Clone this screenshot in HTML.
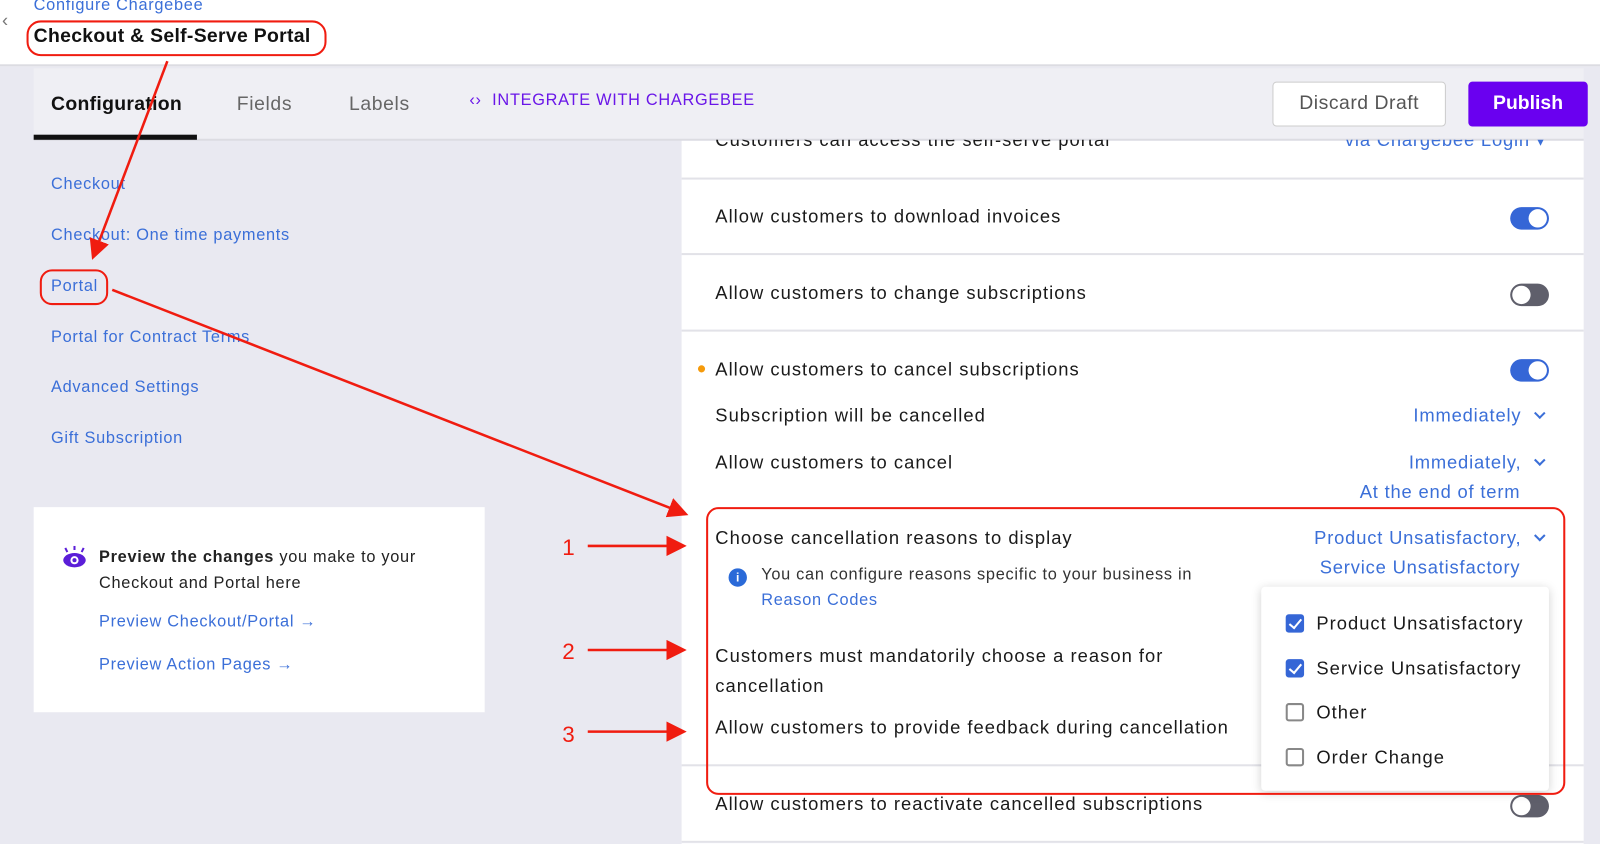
<!DOCTYPE html>
<html><head><meta charset="utf-8"><style>
*{margin:0;padding:0;box-sizing:border-box}
html,body{width:1600px;height:844px;overflow:hidden;background:#e9e9f1;font-family:"Liberation Sans",sans-serif}
#w{position:absolute;left:0;top:0;width:1568px;height:827px;transform:scale(1.0204);transform-origin:0 0;background:#e9e9f1}
.a{position:absolute;white-space:nowrap}
.t{font-size:18px;color:#1a1a1a;letter-spacing:1px}
.l{font-size:16px;letter-spacing:.7px}
.b{color:#3b6fd8}
.v{font-size:18px;letter-spacing:.8px;color:#3b6fd8;text-align:right}
.hr{position:absolute;left:668px;width:884px;height:2px;background:#e2e2e8}
.tg{position:absolute;width:38px;height:22px;border-radius:11px;background:#3566d6}
.tg::after{content:"";position:absolute;right:2px;top:2px;width:18px;height:18px;border-radius:50%;background:#fff}
.tg.off{background:#5f5f6b}.tg.off::after{left:2px;right:auto}
.cb{position:absolute;width:18px;height:18px;border-radius:3px;border:2px solid #888;background:#fff}
.cb.on{background:#3566d6;border-color:#3566d6}
.cb.on::after{content:"";position:absolute;left:4px;top:0px;width:5px;height:10px;border:solid #fff;border-width:0 2px 2px 0;transform:rotate(40deg)}
.chev{display:inline-block;width:8px;height:8px;border:solid #3b6fd8;border-width:0 2px 2px 0;transform:rotate(45deg);margin-left:14px;position:relative;top:-4px}
</style></head><body><div id="w">
<div class="a" style="left:0;top:0;width:1568px;height:65px;background:#fff;border-bottom:2px solid #dcdce2"></div>
<div class="a" style="left:2px;top:10px;font-size:18px;color:#777">‹</div>
<div class="a b l" style="left:33px;top:-3px">Configure Chargebee</div>
<div class="a" style="left:33px;top:25px;font-size:19px;color:#111;font-weight:bold;letter-spacing:.3px">Checkout &amp; Self-Serve Portal</div>
<div class="a" style="left:33px;top:67px;width:1519px;height:71px;background:#efeff4;border-bottom:2px solid #dcdce2"></div>
<div class="a" style="left:50px;top:92px;font-size:19px;color:#111;font-weight:bold;letter-spacing:.3px">Configuration</div>
<div class="a" style="left:33px;top:132px;width:160px;height:5px;background:#111"></div>
<div class="a" style="left:232px;top:92px;font-size:19px;color:#666;letter-spacing:.6px">Fields</div>
<div class="a" style="left:342px;top:92px;font-size:19px;color:#666;letter-spacing:.6px">Labels</div>
<div class="a" style="left:460px;top:90px;font-size:16px;color:#6a16e8;letter-spacing:.7px">‹› &nbsp;INTEGRATE WITH CHARGEBEE</div>
<div class="a" style="left:1247px;top:80px;width:170px;height:44px;border:1px solid #ccc;border-radius:4px;background:#fff;font-size:19px;color:#555;text-align:center;line-height:42px;letter-spacing:.5px">Discard Draft</div>
<div class="a" style="left:1439px;top:80px;width:117px;height:44px;border-radius:4px;background:#6a00f0;font-size:19px;color:#fff;text-align:center;line-height:44px;font-weight:bold">Publish</div>
<div class="a b l" style="left:50px;top:172px">Checkout</div>
<div class="a b l" style="left:50px;top:222px">Checkout: One time payments</div>
<div class="a b l" style="left:50px;top:272px">Portal</div>
<div class="a b l" style="left:50px;top:322px">Portal for Contract Terms</div>
<div class="a b l" style="left:50px;top:371px">Advanced Settings</div>
<div class="a b l" style="left:50px;top:421px">Gift Subscription</div>
<div class="a" style="left:33px;top:497px;width:442px;height:201px;background:#fff"></div>
<svg class="a" style="left:60px;top:535px" width="26" height="22"><g stroke="#5b1ed8" stroke-width="2"><line x1="4" y1="2" x2="6" y2="6"/><line x1="13" y1="0" x2="13" y2="4"/><line x1="22" y1="2" x2="20" y2="6"/></g><ellipse cx="13" cy="14" rx="11" ry="7" fill="#5b1ed8"/><circle cx="13" cy="14" r="4" fill="#fff"/><circle cx="13" cy="14" r="2" fill="#5b1ed8"/></svg>
<div class="a l" style="left:97px;top:534px;color:#222;line-height:25px"><b>Preview the changes</b> you make to your<br>Checkout and Portal here</div>
<div class="a b l" style="left:97px;top:601px">Preview Checkout/Portal →</div>
<div class="a b l" style="left:97px;top:643px">Preview Action Pages →</div>
<div class="a" style="left:668px;top:138px;width:884px;height:689px;background:#fff"></div>
<div class="a t" style="left:701px;top:127px;clip-path:inset(10px 0 0 0)">Customers can access the self-serve portal</div>
<div class="a v" style="right:53px;top:127px;clip-path:inset(10px 0 0 0)">via Chargebee Login ▾</div>
<div class="hr" style="top:174px"></div>
<div class="a t" style="left:701px;top:202px">Allow customers to download invoices</div>
<div class="tg" style="left:1480px;top:203px"></div>
<div class="hr" style="top:248px"></div>
<div class="a t" style="left:701px;top:277px">Allow customers to change subscriptions</div>
<div class="tg off" style="left:1480px;top:278px"></div>
<div class="hr" style="top:323px"></div>
<div class="a" style="left:684px;top:358px;width:7px;height:7px;border-radius:50%;background:#f59a0b"></div>
<div class="a t" style="left:701px;top:352px">Allow customers to cancel subscriptions</div>
<div class="tg" style="left:1480px;top:352px"></div>
<div class="a t" style="left:701px;top:397px">Subscription will be cancelled</div>
<div class="a v" style="right:55px;top:397px">Immediately<span class="chev"></span></div>
<div class="a t" style="left:701px;top:443px">Allow customers to cancel</div>
<div class="a v" style="right:55px;top:443px">Immediately,<span class="chev"></span></div>
<div class="a v" style="right:78px;top:472px">At the end of term</div>
<div class="a t" style="left:701px;top:517px">Choose cancellation reasons to display</div>
<div class="a v" style="right:55px;top:517px">Product Unsatisfactory,<span class="chev"></span></div>
<div class="a v" style="right:78px;top:546px">Service Unsatisfactory</div>
<div class="a" style="left:714px;top:557px;width:18px;height:18px;border-radius:50%;background:#2a6ad8;color:#fff;font-size:12px;font-weight:bold;text-align:center;line-height:18px">i</div>
<div class="a l" style="left:746px;top:555px;color:#333">You can configure reasons specific to your business in</div>
<div class="a b l" style="left:746px;top:580px">Reason Codes</div>
<div class="a t" style="left:701px;top:629px;line-height:29px">Customers must mandatorily choose a reason for<br>cancellation</div>
<div class="a t" style="left:701px;top:703px">Allow customers to provide feedback during cancellation</div>
<div class="hr" style="top:749px"></div>
<div class="a t" style="left:701px;top:778px">Allow customers to reactivate cancelled subscriptions</div>
<div class="tg off" style="left:1480px;top:779px"></div>
<div class="hr" style="top:824px"></div>
<div class="a" style="left:1236px;top:575px;width:282px;height:200px;background:#fff;border-radius:4px;box-shadow:0 2px 10px rgba(0,0,0,.18)"></div>
<div class="cb on" style="left:1260px;top:602px"></div><div class="a t" style="left:1290px;top:601px">Product Unsatisfactory</div>
<div class="cb on" style="left:1260px;top:646px"></div><div class="a t" style="left:1290px;top:645px">Service Unsatisfactory</div>
<div class="cb" style="left:1260px;top:689px"></div><div class="a t" style="left:1290px;top:688px">Other</div>
<div class="cb" style="left:1260px;top:733px"></div><div class="a t" style="left:1290px;top:732px">Order Change</div>
<div class="a" style="left:26px;top:20px;width:294px;height:35px;border:2.5px solid #f01c10;border-radius:14px"></div>
<div class="a" style="left:39px;top:264px;width:67px;height:35px;border:2.5px solid #f01c10;border-radius:12px"></div>
<div class="a" style="left:692px;top:497px;width:842px;height:282px;border:2.5px solid #f01c10;border-radius:12px"></div>
<svg class="a" style="left:0;top:0" width="1568" height="827"><defs><marker id="m" markerWidth="8" markerHeight="8" refX="6" refY="4" orient="auto" markerUnits="strokeWidth"><path d="M0,0L8,4L0,8Z" fill="#f01c10"/></marker></defs>
<g stroke="#f01c10" stroke-width="2.5" fill="none" marker-end="url(#m)"><line x1="164" y1="60" x2="92" y2="250"/><line x1="110" y1="284" x2="670" y2="503"/><line x1="576" y1="535" x2="668" y2="535"/><line x1="576" y1="637" x2="668" y2="637"/><line x1="576" y1="717" x2="668" y2="717"/></g>
<g fill="#f01c10" font-family="Liberation Sans" font-size="22"><text x="551" y="544">1</text><text x="551" y="646">2</text><text x="551" y="727">3</text></g></svg>
</div></body></html>
